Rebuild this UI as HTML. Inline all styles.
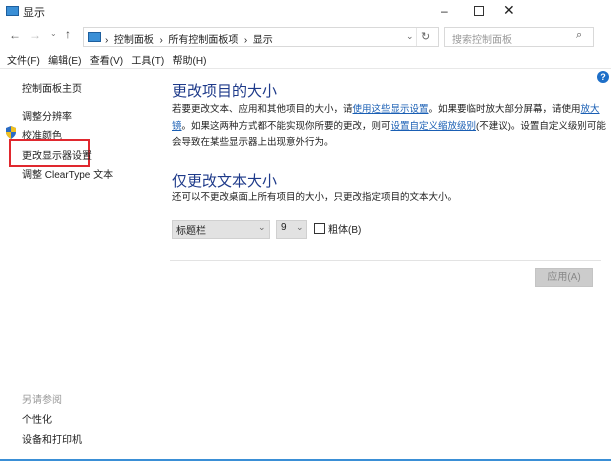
<!DOCTYPE html>
<html><head><meta charset="utf-8"><style>
*{margin:0;padding:0;box-sizing:border-box}
body{width:611px;height:461px;background:#fff;position:relative;overflow:hidden;font-family:"Liberation Sans","Noto Sans CJK SC",sans-serif;font-size:10px;color:#222}
.a{position:absolute;white-space:nowrap}
.g{color:#999}
.lnk{color:#1a5fb4;text-decoration:underline}
.h{color:#1e3a8a;font-size:15px}
.p{font-size:9.5px;line-height:16.5px;color:#222}
</style></head><body>
<div class="a" style="left:6px;top:6px;width:13px;height:10px;background:#3a8fd6;border:1px solid #1e5f9e"></div>
<div class="a" style="left:23px;top:4px;font-size:11px">显示</div>
<div class="a" style="left:441px;top:4px;font-size:12px">–</div>
<div class="a" style="left:474px;top:6px;width:10px;height:10px;border:1px solid #333"></div>
<div class="a" style="left:503px;top:2px;font-size:14px">✕</div>
<div class="a" style="left:9px;top:28px;font-size:12px;color:#555">←</div>
<div class="a" style="left:29px;top:28px;font-size:12px;color:#bbb">→</div>
<div class="a" style="left:50px;top:29px;font-size:8px;color:#777">⌄</div>
<div class="a" style="left:65px;top:27px;font-size:12px;color:#444">↑</div>
<div class="a" style="left:83px;top:27px;width:356px;height:20px;border:1px solid #d9d9d9"></div>
<div class="a" style="left:88px;top:32px;width:13px;height:10px;background:#3a8fd6;border:1px solid #1e5f9e"></div>
<div class="a" style="left:105px;top:31px;font-size:10px">›&nbsp; 控制面板 &nbsp;›&nbsp; 所有控制面板项 &nbsp;›&nbsp; 显示</div>
<div class="a" style="left:406px;top:31px;font-size:9px;color:#666">⌄</div>
<div class="a" style="left:416px;top:28px;width:1px;height:18px;background:#e5e5e5"></div>
<div class="a" style="left:421px;top:30px;font-size:11px;color:#666">↻</div>
<div class="a" style="left:444px;top:27px;width:150px;height:20px;border:1px solid #d9d9d9"></div>
<div class="a g" style="left:452px;top:31px">搜索控制面板</div>
<div class="a" style="left:576px;top:29px;font-size:11px;color:#555">⌕</div>
<div class="a" style="left:7px;top:52px">文件(F) &nbsp; 编辑(E) &nbsp; 查看(V) &nbsp; 工具(T) &nbsp; 帮助(H)</div>
<div class="a" style="left:0;top:68px;width:611px;height:1px;background:#e8e8e8"></div>
<div class="a" style="left:22px;top:80px">控制面板主页</div>
<div class="a" style="left:22px;top:108px">调整分辨率</div>
<svg class="a" style="left:5px;top:126px" width="12" height="13" viewBox="0 0 12 13"><path d="M6 0L11 2V6C11 9 9 11 6 13C3 11 1 9 1 6V2Z" fill="#2b6cc4"/><path d="M6 0L11 2V6H6ZM6 6V13C3 11 1 9 1 6Z" fill="#f0c020"/></svg>
<div class="a" style="left:22px;top:127px">校准颜色</div>
<div class="a" style="left:9px;top:139px;width:81px;height:28px;border:2px solid #e0282e"></div>
<div class="a" style="left:22px;top:147px">更改显示器设置</div>
<div class="a" style="left:22px;top:166px">调整 ClearType 文本</div>
<div class="a g" style="left:22px;top:391px">另请参阅</div>
<div class="a" style="left:22px;top:411px">个性化</div>
<div class="a" style="left:22px;top:431px">设备和打印机</div>
<div class="a" style="left:597px;top:71px;width:12px;height:12px;border-radius:50%;background:#1e6fc8;color:#fff;font-size:9px;font-weight:bold;text-align:center;line-height:12px">?</div>
<div class="a h" style="left:172px;top:80px">更改项目的大小</div>
<div class="a p" style="left:172px;top:102px">若要更改文本、应用和其他项目的大小，请<span class="lnk">使用这些显示设置</span>。如果要临时放大部分屏幕，请使用<span class="lnk">放大</span><br><span class="lnk">镜</span>。如果这两种方式都不能实现你所要的更改，则可<span class="lnk">设置自定义缩放级别</span>(不建议)。设置自定义级别可能<br>会导致在某些显示器上出现意外行为。</div>
<div class="a h" style="left:172px;top:170px">仅更改文本大小</div>
<div class="a p" style="left:172px;top:190px">还可以不更改桌面上所有项目的大小，只更改指定项目的文本大小。</div>
<div class="a" style="left:172px;top:220px;width:98px;height:19px;background:#e2e2e2;border:1px solid #d0d0d0"></div>
<div class="a" style="left:176px;top:222px">标题栏</div>
<div class="a" style="left:258px;top:222px;font-size:9px;color:#666">⌄</div>
<div class="a" style="left:276px;top:220px;width:31px;height:19px;background:#e2e2e2;border:1px solid #d0d0d0"></div>
<div class="a" style="left:281px;top:222px">9</div>
<div class="a" style="left:296px;top:222px;font-size:9px;color:#666">⌄</div>
<div class="a" style="left:314px;top:223px;width:11px;height:11px;border:1px solid #333;background:#fff"></div>
<div class="a" style="left:328px;top:221px">粗体(B)</div>
<div class="a" style="left:170px;top:260px;width:431px;height:1px;background:#e3e3e3"></div>
<div class="a" style="left:535px;top:268px;width:58px;height:19px;background:#cccccc;border:1px solid #c4c4c4;color:#888;text-align:center;line-height:17px">应用(A)</div>
<div class="a" style="left:0;top:459px;width:611px;height:2px;background:#3a8fd6"></div>
</body></html>
